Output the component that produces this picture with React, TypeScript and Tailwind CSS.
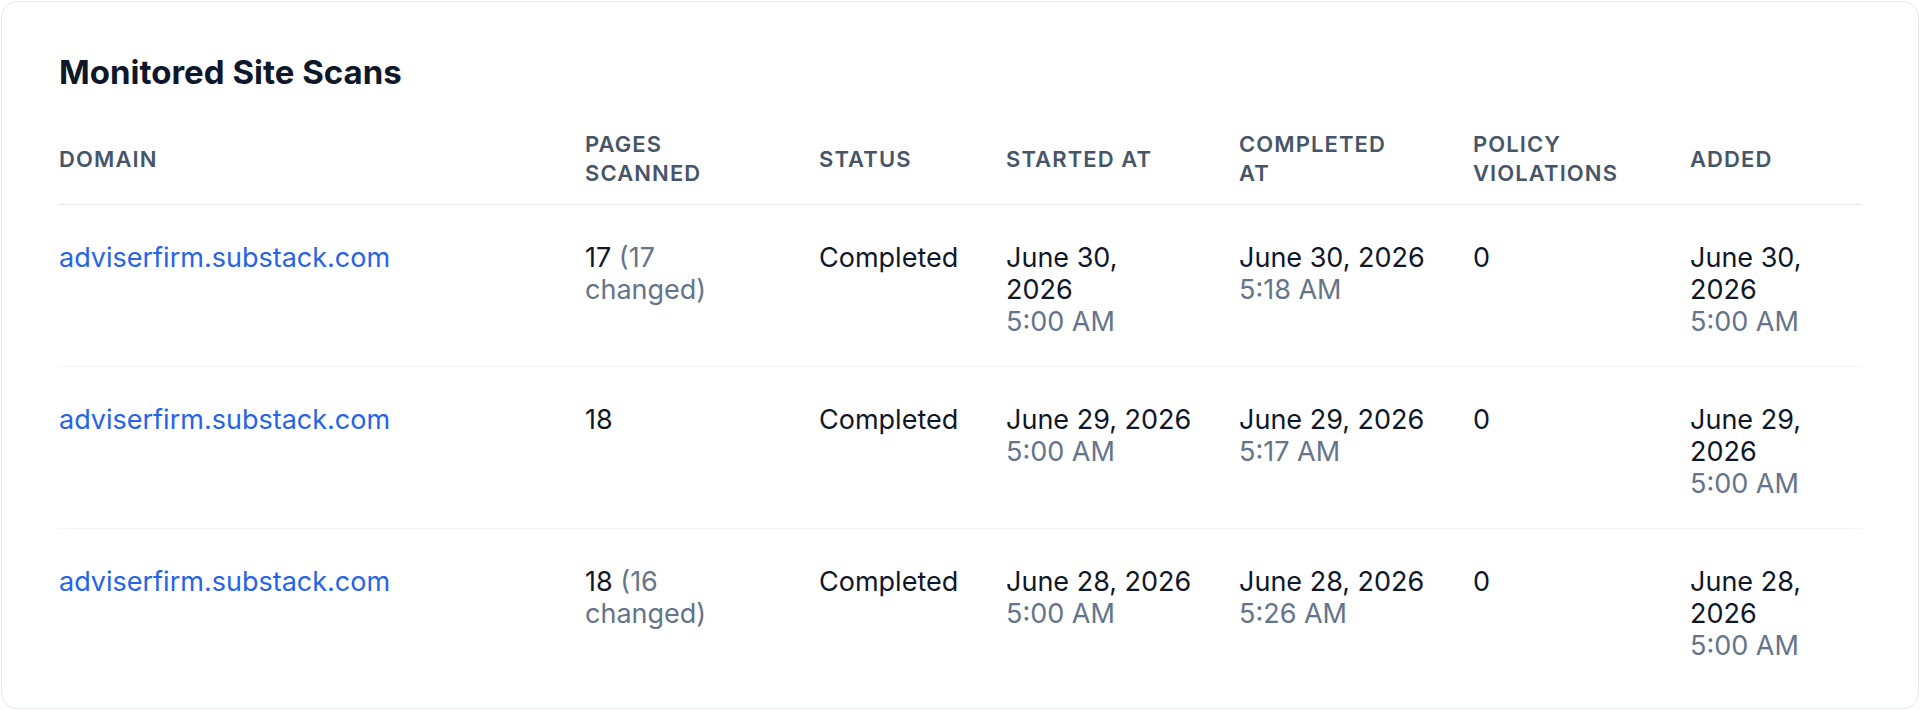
import React from "react";

type Row = {
  domain: string;
  pages: React.ReactNode;
  started: React.ReactNode;
  completed: React.ReactNode;
  violations: string;
  added: React.ReactNode;
};

const Muted = ({ children }: { children: React.ReactNode }) => (
  <span className="text-[#64748b]">{children}</span>
);

const Line = ({ children, muted }: { children: React.ReactNode; muted?: boolean }) => (
  <div className={muted ? "text-[#64748b] whitespace-nowrap" : "text-[#0f172a] whitespace-nowrap"}>{children}</div>
);

const rows: Row[] = [
  {
    domain: "adviserfirm.substack.com",
    pages: (
      <>
        <Line>
          17 <Muted>(17</Muted>
        </Line>
        <Line muted>changed)</Line>
      </>
    ),
    started: (
      <>
        <Line>June 30,</Line>
        <Line>2026</Line>
        <Line muted>5:00 AM</Line>
      </>
    ),
    completed: (
      <>
        <Line>June 30, 2026</Line>
        <Line muted>5:18 AM</Line>
      </>
    ),
    violations: "0",
    added: (
      <>
        <Line>June 30,</Line>
        <Line>2026</Line>
        <Line muted>5:00 AM</Line>
      </>
    ),
  },
  {
    domain: "adviserfirm.substack.com",
    pages: <Line>18</Line>,
    started: (
      <>
        <Line>June 29, 2026</Line>
        <Line muted>5:00 AM</Line>
      </>
    ),
    completed: (
      <>
        <Line>June 29, 2026</Line>
        <Line muted>5:17 AM</Line>
      </>
    ),
    violations: "0",
    added: (
      <>
        <Line>June 29,</Line>
        <Line>2026</Line>
        <Line muted>5:00 AM</Line>
      </>
    ),
  },
  {
    domain: "adviserfirm.substack.com",
    pages: (
      <>
        <Line>
          18 <Muted>(16</Muted>
        </Line>
        <Line muted>changed)</Line>
      </>
    ),
    started: (
      <>
        <Line>June 28, 2026</Line>
        <Line muted>5:00 AM</Line>
      </>
    ),
    completed: (
      <>
        <Line>June 28, 2026</Line>
        <Line muted>5:26 AM</Line>
      </>
    ),
    violations: "0",
    added: (
      <>
        <Line>June 28,</Line>
        <Line>2026</Line>
        <Line muted>5:00 AM</Line>
      </>
    ),
  },
];

const cols = "grid grid-cols-[526px_234px_187px_233px_234px_217px_1fr]";

const Head = ({ children }: { children: React.ReactNode }) => (
  <div className="flex items-center text-[22px] leading-[29px] font-semibold tracking-[0.05em] uppercase text-[#475569]">
    <div>{children}</div>
  </div>
);

export default function App() {
  return (
    <div
      className="w-[1920px] h-[710px] bg-white p-px"
      style={{ fontFamily: "Inter, 'Noto Sans', sans-serif" }}
    >
      <div className="h-[708px] rounded-2xl border border-[#e2e8f0] bg-white px-[57px] pt-[52px] overflow-hidden">
        <h2 className="text-[33px] leading-[36px] font-bold text-[#0f172a] mb-[24px]">
          Monitored Site Scans
        </h2>
        <div className={`${cols} border-b border-[#e2e8f0] pt-[16px] pb-[16px]`}>
          <Head>Domain</Head>
          <Head>
            Pages
            <br />
            Scanned
          </Head>
          <Head>Status</Head>
          <Head>Started at</Head>
          <Head>
            Completed
            <br />
            at
          </Head>
          <Head>
            Policy
            <br />
            Violations
          </Head>
          <Head>Added</Head>
        </div>
        {rows.map((r, i) => (
          <div
            key={i}
            className={`${cols} text-[27px] leading-[32px] pt-[37px] pb-[28px] ${
              i < rows.length - 1 ? "border-b border-[#f1f5f9]" : ""
            }`}
          >
            <div className="text-[#2563eb] whitespace-nowrap">{r.domain}</div>
            <div>{r.pages}</div>
            <div className="text-[#0f172a]">Completed</div>
            <div>{r.started}</div>
            <div>{r.completed}</div>
            <div className="text-[#0f172a]">{r.violations}</div>
            <div>{r.added}</div>
          </div>
        ))}
      </div>
    </div>
  );
}
